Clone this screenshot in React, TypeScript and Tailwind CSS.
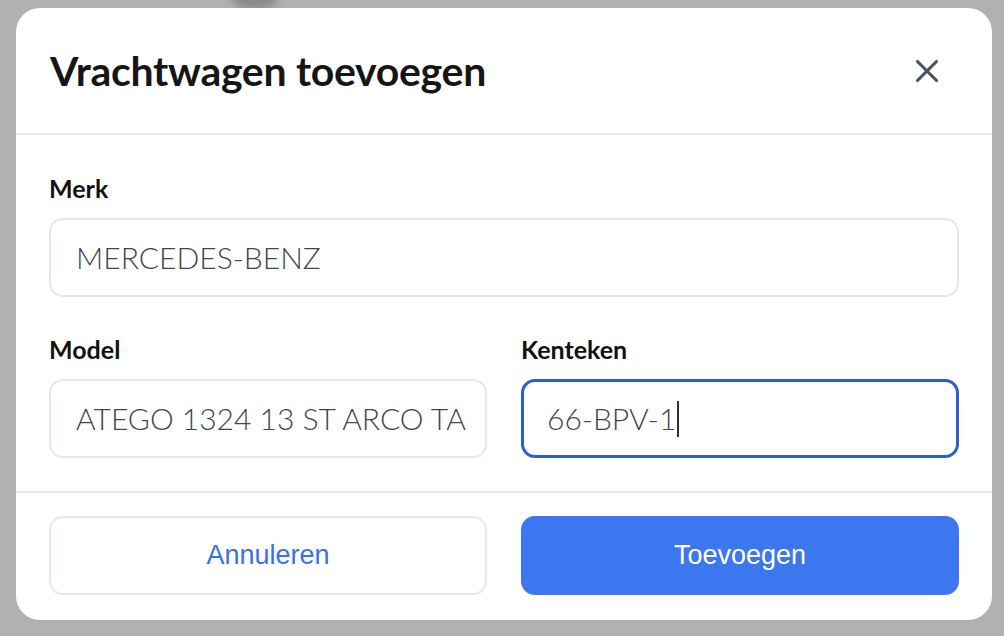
import { X } from "lucide-react";

const sans = "font-['Lato','Liberation_Sans',sans-serif]";

function Field({ label, value, focused }: { label: string; value: string; focused?: boolean }) {
  return (
    <div className="flex flex-col">
      <label className={`${sans} text-[25px] leading-[30px] font-bold text-[#111111] mb-[15px]`}>{label}</label>
      <div
        className={`flex h-[79px] items-center overflow-hidden whitespace-nowrap rounded-[14px] bg-white px-[25px] ${
          focused ? "border-[3px] border-[#2b5fc9] pl-[23px]" : "border-2 border-[#e3e7f3]"
        }`}
      >
        <span className={`${sans} text-[30px] font-light text-[#3f4552]`}>{value}</span>
        {focused && <span className="ml-[1px] h-[36px] w-[2px] bg-[#333]" />}
      </div>
    </div>
  );
}

export default function App() {
  return (
    <div className="relative h-[636px] w-[1004px] overflow-hidden bg-[#b1b1b1]">
      {/* blurred avatar peeking behind the overlay */}
      <div className="absolute -top-[30px] left-[230px] h-[40px] w-[50px] rounded-full bg-[#8a8a8a] blur-[4px]" />

      <div className="relative ml-[16px] mt-[8px] flex h-[612px] w-[976px] flex-col rounded-[24px] bg-white">
        {/* Header */}
        <div className="flex h-[127px] items-center justify-between border-b-2 border-[#e6e9f4] pl-[34px] pr-[46px]">
          <h2 className={`${sans} text-[41px] font-bold tracking-[-0.3px] text-[#161616]`}>Vrachtwagen toevoegen</h2>
          <X className="h-[38px] w-[38px] text-[#4b5360]" strokeWidth={2} />
        </div>

        {/* Body */}
        <div className="flex flex-col gap-[37px] px-[33px] pt-[38px] pb-[33px]">
          <Field label="Merk" value="MERCEDES-BENZ" />
          <div className="grid grid-cols-2 gap-[34px]">
            <Field label="Model" value="ATEGO 1324 13 ST ARCO TA" />
            <Field label="Kenteken" value="66-BPV-1" focused />
          </div>
        </div>

        {/* Footer */}
        <div className="grid grid-cols-2 gap-[34px] border-t-2 border-[#e6e9f4] px-[33px] pt-[23px]">
          <button className="h-[79px] rounded-[14px] border-2 border-[#e3e7f3] bg-white font-['Liberation_Sans',sans-serif] text-[27px] text-[#3b70ea]">
            Annuleren
          </button>
          <button className="h-[79px] rounded-[14px] bg-[#3c77ef] font-['Liberation_Sans',sans-serif] text-[27px] text-white">
            Toevoegen
          </button>
        </div>
      </div>
    </div>
  );
}
